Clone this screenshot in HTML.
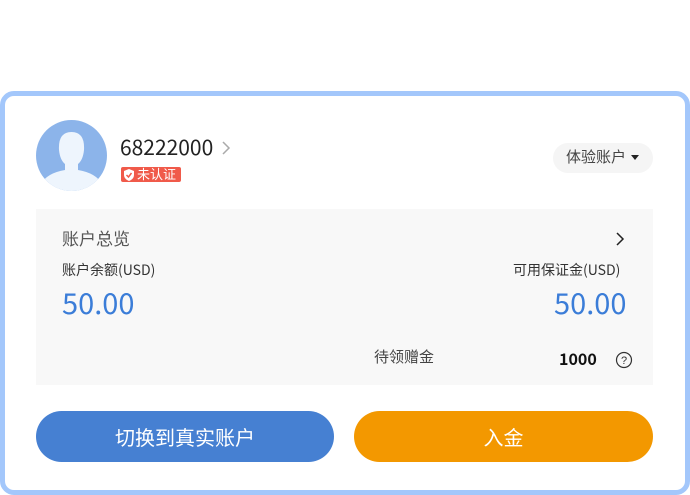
<!DOCTYPE html>
<html><head><meta charset="utf-8"><style>
body{margin:0;width:690px;height:495px;background:#fff;position:relative;overflow:hidden;font-family:"Noto Sans CJK SC","Liberation Sans",sans-serif;}
.card{position:absolute;left:0;top:91px;width:680px;height:394px;border:5px solid #a3c7fb;border-radius:14px;background:#fff;}
.a{position:absolute;line-height:1.2;}
</style></head><body>
<div class="card"></div>
<svg class="a" style="left:36px;top:120px" width="71" height="71" viewBox="0 0 71 71">
<defs><clipPath id="c"><circle cx="35.5" cy="35.5" r="35.5"/></clipPath></defs>
<circle cx="35.5" cy="35.5" r="35.5" fill="#8cb4ea"/>
<g clip-path="url(#c)" fill="#eef5fd">
<path d="M23 30 Q22 12 35.5 12 Q49 12 48 30 Q47 40 42 44 L42 50 Q60 53 66 64 L66 75 L5 75 L5 64 Q11 53 29 50 L29 44 Q24 40 23 30Z"/>
</g></svg>
<div class="a" style="left:120px;top:135px;font-size:21px;color:#222">68222000</div>
<svg class="a" style="left:221px;top:141px" width="10" height="14"><path d="M2 1 L8 7 L2 13" stroke="#aaa" stroke-width="1.5" fill="none"/></svg>
<div class="a" style="left:121px;top:167px;width:60px;height:15px;background:#f05a4a;border-radius:2px;"></div>
<svg class="a" style="left:122px;top:168px" width="14" height="14"><path d="M7 1 L12 3 L12 7 Q12 11 7 13 Q2 11 2 7 L2 3Z" fill="#fff"/><path d="M4.5 7 L6.5 9 L9.5 5" stroke="#f05a4a" stroke-width="1.5" fill="none"/></svg>
<div class="a" style="left:137px;top:166px;font-size:13px;color:#fff;line-height:16px">未认证</div>
<div class="a" style="left:553px;top:143px;width:100px;height:30px;background:#f5f5f5;border-radius:15px;"></div>
<div class="a" style="left:566px;top:148px;font-size:15px;color:#444">体验账户</div>
<svg class="a" style="left:631px;top:155px" width="8" height="6"><path d="M0 0 L8 0 L4 5Z" fill="#222"/></svg>
<div class="a" style="left:36px;top:209px;width:617px;height:176px;background:#f8f8f8"></div>
<div class="a" style="left:62px;top:228px;font-size:17px;color:#555">账户总览</div>
<svg class="a" style="left:615px;top:232px" width="10" height="14"><path d="M2 1 L8 7 L2 13" stroke="#222" stroke-width="1.5" fill="none"/></svg>
<div class="a" style="left:62px;top:262px;font-size:14px;color:#333">账户余额(USD)</div>
<div class="a" style="left:513px;top:262px;font-size:14px;color:#333">可用保证金(USD)</div>
<div class="a" style="left:62px;top:285px;font-size:29px;color:#3b7dd8">50.00</div>
<div class="a" style="left:554px;top:285px;font-size:29px;color:#3b7dd8">50.00</div>
<div class="a" style="left:374px;top:348px;font-size:15px;color:#444">待领赠金</div>
<div class="a" style="left:559px;top:349px;font-size:16px;color:#111;font-weight:bold">1000</div>
<svg class="a" style="left:615px;top:351px" width="18" height="18"><circle cx="9" cy="9" r="7.5" stroke="#333" stroke-width="1.2" fill="none"/><text x="9" y="13" font-size="11" text-anchor="middle" fill="#333" font-family="Liberation Sans">?</text></svg>
<div class="a" style="left:36px;top:411px;width:298px;height:51px;background:#4680d2;border-radius:26px;color:#fff;font-size:20px;text-align:center;line-height:51px">切换到真实账户</div>
<div class="a" style="left:354px;top:411px;width:299px;height:51px;background:#f39800;border-radius:26px;color:#fff;font-size:20px;text-align:center;line-height:51px">入金</div>
</body></html>
